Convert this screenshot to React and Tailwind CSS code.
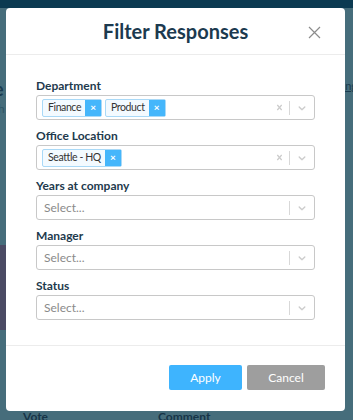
import React from 'react'

const Chevron = () => (
  <svg width="12" height="12" viewBox="0 0 20 20" fill="#cccccc">
    <path d="M4.516 7.548c0.436-0.446 1.043-0.481 1.576 0l3.908 3.747 3.908-3.747c0.533-0.481 1.141-0.446 1.574 0 0.436 0.445 0.408 1.197 0 1.615-0.406 0.418-4.695 4.502-4.695 4.502-0.217 0.223-0.502 0.335-0.787 0.335s-0.57-0.112-0.789-0.335c0 0-4.287-4.084-4.695-4.502s-0.436-1.17 0-1.615z" />
  </svg>
)

const ClearX = () => (
  <svg width="11" height="11" viewBox="0 0 20 20" fill="#cccccc">
    <path d="M14.348 14.849c-0.469 0.469-1.229 0.469-1.697 0l-2.651-3.030-2.651 3.029c-0.469 0.469-1.229 0.469-1.697 0-0.469-0.469-0.469-1.229 0-1.697l2.758-3.15-2.759-3.152c-0.469-0.469-0.469-1.228 0-1.697s1.228-0.469 1.697 0l2.652 3.031 2.651-3.031c0.469-0.469 1.228-0.469 1.697 0s0.469 1.229 0 1.697l-2.758 3.152 2.758 3.15c0.469 0.469 0.469 1.229 0 1.698z" />
  </svg>
)

const Tag = ({ text }) => (
  <div className="flex h-[18px] items-stretch rounded-[2px] border border-[#a9d9f7] bg-[#f3faff]">
    <span className="flex items-center pl-[5px] pr-[4px] text-[10.5px] tracking-[-0.4px] text-[#333]">{text}</span>
    <span className="flex w-[16px] items-center justify-center bg-[#45b6fb] text-[10px] font-bold text-white">×</span>
  </div>
)

const SelectBox = ({ tags }) => (
  <div className="flex h-[25px] items-center rounded-[3px] border border-[#c8c8c8] bg-white">
    <div className="flex flex-1 items-center gap-[3px] pl-[5px]">
      {tags && tags.length > 0 ? (
        tags.map(t => <Tag key={t} text={t} />)
      ) : (
        <span className="pl-[2px] text-[12px] text-[#8a8a8a]">Select...</span>
      )}
    </div>
    {tags && tags.length > 0 && (
      <div className="flex w-[20px] items-center justify-center">
        <ClearX />
      </div>
    )}
    <div className="h-[14px] w-px bg-[#d8d8d8]" />
    <div className="flex w-[24px] items-center justify-center">
      <Chevron />
    </div>
  </div>
)

const Field = ({ label, tags }) => (
  <div className="flex flex-col">
    <label className="h-[16px] text-[12px] font-bold leading-[19px] text-[#1e3a4d]">{label}</label>
    <div className="mt-[3px]">
      <SelectBox tags={tags} />
    </div>
  </div>
)

export default function App() {
  const fields = [
    { label: 'Department', tags: ['Finance', 'Product'] },
    { label: 'Office Location', tags: ['Seattle - HQ'] },
    { label: 'Years at company' },
    { label: 'Manager' },
    { label: 'Status' },
  ]

  return (
    <div className="relative h-[420px] w-[353px] overflow-hidden bg-[#466d7b]" style={{ fontFamily: 'Lato, "Open Sans", sans-serif' }}>
      {/* dimmed page behind */}
      <div className="h-[8px] bg-[#0b3a51]" />
      <div className="relative h-[412px]">
        <div className="absolute left-[-6px] top-[68px] text-[18px] font-bold text-[#1a3b4f]">e</div>
        <div className="absolute left-[-2px] top-[92px] text-[12px] text-[#2e5565]">h</div>
        <div className="absolute right-[-4px] top-[70px] text-[11px] text-[#1a3b4f] underline">ng</div>
        <div className="absolute left-0 top-[237px] h-[85px] w-[8px] bg-[#4b4b64]" />
        <div className="absolute left-[23px] top-[400px] text-[12px] font-bold text-[#163447]">Vote</div>
        <div className="absolute left-[158px] top-[400px] text-[12px] font-bold text-[#163447]">Comment</div>
      </div>

      {/* modal */}
      <div className="absolute left-[6px] top-[8px] flex h-[403px] w-[339px] flex-col rounded-[4px] bg-white">
        <div className="relative flex h-[47px] items-center justify-center border-b border-[#ececec]">
          <h1 className="text-[20px] font-bold text-[#1c3a4f]">Filter Responses</h1>
          <button className="absolute right-[24px] top-[17px] flex h-[14px] w-[14px] items-center justify-center">
            <svg width="13" height="13" viewBox="0 0 13 13" stroke="#8c8c8c" strokeWidth="1.2">
              <path d="M1 1 L12 12 M12 1 L1 12" />
            </svg>
          </button>
        </div>
        <div className="flex flex-col gap-[6px] px-[30px] pb-[25px] pt-[21px]">
          {fields.map(f => (
            <Field key={f.label} label={f.label} tags={f.tags} />
          ))}
        </div>
        <div className="flex justify-end gap-[5px] border-t border-[#ececec] px-[20px] pt-[19px]">
          <button className="h-[25px] w-[73px] rounded-[2px] bg-[#3eb4fe] text-[12px] text-white">Apply</button>
          <button className="h-[25px] w-[78px] rounded-[2px] bg-[#9e9e9e] text-[12px] text-white">Cancel</button>
        </div>
      </div>
    </div>
  )
}
